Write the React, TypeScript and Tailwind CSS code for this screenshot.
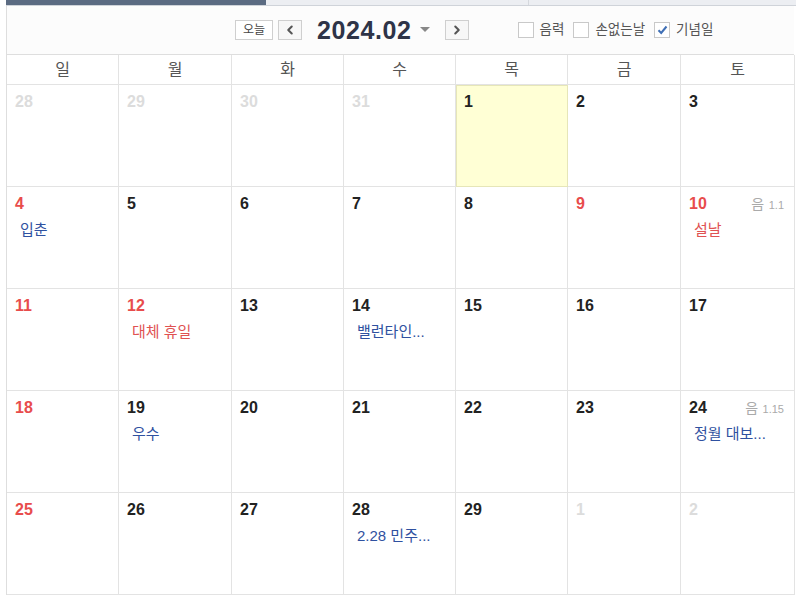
import { ChevronLeft, ChevronRight } from 'lucide-react';

type Cell = {
  day: number;
  muted?: boolean;
  red?: boolean;
  today?: boolean;
  event?: string;
  eventRed?: boolean;
  lunar?: string;
};

const weekNames = ['일', '월', '화', '수', '목', '금', '토'];

const weeks: Cell[][] = [
  [
    { day: 28, muted: true },
    { day: 29, muted: true },
    { day: 30, muted: true },
    { day: 31, muted: true },
    { day: 1, today: true },
    { day: 2 },
    { day: 3 },
  ],
  [
    { day: 4, red: true, event: '입춘' },
    { day: 5 },
    { day: 6 },
    { day: 7 },
    { day: 8 },
    { day: 9, red: true },
    { day: 10, red: true, event: '설날', eventRed: true, lunar: '1.1' },
  ],
  [
    { day: 11, red: true },
    { day: 12, red: true, event: '대체 휴일', eventRed: true },
    { day: 13 },
    { day: 14, event: '밸런타인...' },
    { day: 15 },
    { day: 16 },
    { day: 17 },
  ],
  [
    { day: 18, red: true },
    { day: 19, event: '우수' },
    { day: 20 },
    { day: 21 },
    { day: 22 },
    { day: 23 },
    { day: 24, event: '정월 대보...', lunar: '1.15' },
  ],
  [
    { day: 25, red: true },
    { day: 26 },
    { day: 27 },
    { day: 28, event: '2.28 민주...' },
    { day: 29 },
    { day: 1, muted: true },
    { day: 2, muted: true },
  ],
];

function CheckBox({ label, checked }: { label: string; checked?: boolean }) {
  return (
    <label className="flex items-center gap-[6px]">
      <span className="flex h-[16px] w-[16px] items-center justify-center border border-[#c9c9c9] bg-white">
        {checked && (
          <svg width="11" height="10" viewBox="0 0 11 10">
            <path d="M1.5 5.2 L4.2 8 L9.5 1.5" fill="none" stroke="#3f6fb5" strokeWidth="2" />
          </svg>
        )}
      </span>
      <span className="text-[13.5px] text-[#555]">{label}</span>
    </label>
  );
}

function DayCell({ cell }: { cell: Cell }) {
  const numColor = cell.muted ? 'text-[#dcdcdc]' : cell.red ? 'text-[#e84c4c]' : 'text-[#222]';
  return (
    <div
      className={`relative h-[102px] border-r border-b border-[#e3e3e3] ${
        cell.today ? 'bg-[#ffffd5] outline outline-1 outline-[#e6e6b8] -outline-offset-1' : 'bg-white'
      }`}
    >
      <div className="flex items-start justify-between pl-[8px] pr-[10px] pt-[7px]">
        <span className={`text-[16px] font-bold leading-[20px] ${numColor}`}>{cell.day}</span>
        {cell.lunar && (
          <span className="mt-[1px] leading-[18px] text-[#aaa]">
            <span className="text-[14px]">음</span>{' '}
            <span className="text-[11px]">{cell.lunar}</span>
          </span>
        )}
      </div>
      {cell.event && (
        <div
          className={`mt-[7px] pl-[13px] text-[15px] leading-[18px] ${
            cell.eventRed ? 'text-[#e05252]' : 'text-[#2f51a0]'
          }`}
        >
          {cell.event}
        </div>
      )}
    </div>
  );
}

export default function App() {
  return (
    <div className="h-[597px] w-[796px] overflow-hidden bg-white font-['Liberation_Sans','Noto_Sans_CJK_KR',sans-serif]">
      {/* tab strip */}
      <div className="ml-[6px] flex h-[6px] border-b border-[#cfd3d9]">
        <div className="w-[260px] bg-[#5b6b82]" />
        <div className="w-[263px] border-r border-[#d5d8dd] bg-[#eceef2]" />
        <div className="flex-1 bg-[#eceef2]" />
      </div>

      <div className="ml-[6px] w-[788px] border-l border-[#dedede]">
        {/* header */}
        <div className="flex h-[49px] items-center border-b border-[#dedede] bg-[#fcfcfc]">
          <div className="ml-[228px] flex items-center">
            <button className="flex h-[20px] w-[38px] items-center justify-center border border-[#cfcfcf] bg-white text-[12px] text-[#444]">
              오늘
            </button>
            <button className="ml-[5px] flex h-[20px] w-[24px] items-center justify-center border border-[#cfcfcf] bg-[#f7f7f7]">
              <ChevronLeft size={14} strokeWidth={3.5} className="text-[#555]" />
            </button>
            <span className="ml-[15px] font-['Liberation_Sans',sans-serif] text-[25px] font-bold leading-none tracking-[0.6px] text-[#2e3448]">
              2024.02
            </span>
            <svg className="ml-[8px]" width="10" height="6" viewBox="0 0 10 6">
              <path d="M0 0 H10 L5 5 Z" fill="#888" />
            </svg>
            <button className="ml-[15px] flex h-[20px] w-[24px] items-center justify-center border border-[#cfcfcf] bg-[#f7f7f7]">
              <ChevronRight size={14} strokeWidth={3.5} className="text-[#555]" />
            </button>
          </div>
          <div className="ml-[49px] flex items-center gap-[9px]">
            <CheckBox label="음력" />
            <CheckBox label="손없는날" />
            <CheckBox label="기념일" checked />
          </div>
        </div>

        {/* week names */}
        <div className="grid grid-cols-[112px_113px_112px_112px_112px_113px_114px]">
          {weekNames.map((n) => (
            <div
              key={n}
              className="flex h-[30px] items-center justify-center border-r border-b border-[#e3e3e3] text-[16px] text-[#555]"
            >
              {n}
            </div>
          ))}
        </div>

        {/* days */}
        {weeks.map((w, i) => (
          <div key={i} className="grid grid-cols-[112px_113px_112px_112px_112px_113px_114px]">
            {w.map((c, j) => (
              <DayCell key={j} cell={c} />
            ))}
          </div>
        ))}
      </div>
    </div>
  );
}
